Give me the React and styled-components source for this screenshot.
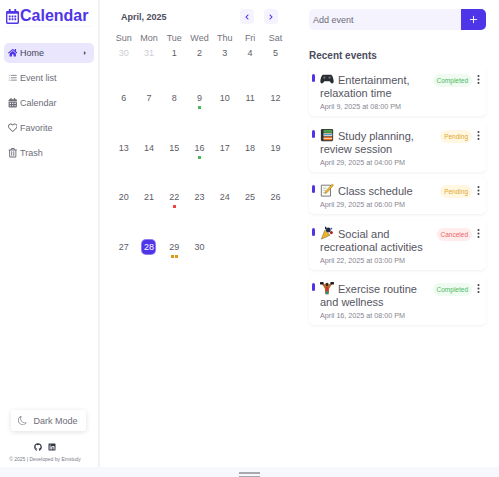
import React from 'react';
import styled, { createGlobalStyle } from 'styled-components';
import { FaHome, FaCaretRight, FaRegCalendarAlt, FaCalendarAlt, FaRegHeart, FaRegTrashAlt, FaGithub, FaLinkedin, FaChevronLeft, FaChevronRight } from 'react-icons/fa';
import { LuList, LuPlus } from 'react-icons/lu';
import { BsMoon, BsThreeDotsVertical } from 'react-icons/bs';

const primary = '#4f35e8';
const textGrey = '#55555f';

const GlobalStyle = createGlobalStyle`
    html, body {
        margin: 0;
        padding: 0;
        height: 100%;
        background: #fff;
        overflow: hidden;
    }
    * {
        box-sizing: border-box;
    }
    body {
        font-family: "Liberation Sans", Arial, sans-serif;
        color: ${textGrey};
    }
`;

const Page = styled.div`
    width: 499px;
    height: 477px;
    display: grid;
    grid-template-rows: 467px 10px;
`;

const Main = styled.div`
    display: grid;
    grid-template-columns: 100px 200px 1fr;
    min-height: 0;
`;

const Sidebar = styled.aside`
    display: flex;
    flex-direction: column;
    border-right: 2px solid #f1f1f4;
    padding: 6px 4px 5px;
`;

const Logo = styled.div`
    display: flex;
    align-items: center;
    gap: 1px;
    height: 21px;
    margin: 0 1px 16px;
    padding-left: 1px;
    color: ${primary};
    font-size: 16px;
    font-weight: 700;
    border-bottom: 1px solid #f8f8fa;
    svg {
        width: 13px;
        height: 15px;
    }
`;

const Nav = styled.nav`
    display: flex;
    flex-direction: column;
    gap: 5px;
`;

const NavItem = styled.div`
    height: 20px;
    display: flex;
    align-items: center;
    gap: 3px;
    padding: 0 4px 0 3.5px;
    border-radius: 5px;
    font-size: 9px;
    color: ${({ $active }) => ($active ? '#45455a' : '#6d6d78')};
    background: ${({ $active }) => ($active ? '#e9e6fd' : 'transparent')};
    > svg:first-child {
        width: 9.5px;
        height: 9.5px;
        color: ${({ $active }) => ($active ? primary : '#6d6d78')};
    }
    span {
        flex: 1;
    }
`;

const Caret = styled(FaCaretRight)`
    width: 6px;
    height: 6px;
    color: #5b5b6a;
    margin-right: 2px;
`;

const SidebarFooter = styled.div`
    margin-top: auto;
    display: flex;
    flex-direction: column;
    align-items: center;
`;

const DarkButton = styled.button`
    width: 75px;
    height: 21px;
    border: 0;
    border-radius: 2px;
    background: #fff;
    box-shadow: 0 1px 5px rgba(40, 40, 80, 0.14);
    display: flex;
    align-items: center;
    justify-content: center;
    gap: 6px;
    font-family: inherit;
    font-size: 9px;
    color: #6d6d78;
    margin: 0 0 12px -2px;
    svg {
        width: 9px;
        height: 9px;
    }
`;

const Socials = styled.div`
    display: flex;
    gap: 6px;
    color: #333844;
    margin-left: -8px;
    margin-bottom: 5px;
    svg {
        width: 8px;
        height: 8px;
    }
`;

const Copyright = styled.div`
    font-size: 5px;
    color: #7c7c86;
    white-space: nowrap;
    margin-left: -8px;
`;

const CalendarPane = styled.section`
    padding: 9px 0 0 11px;
    display: flex;
    flex-direction: column;
`;

const CalendarHead = styled.div`
    display: flex;
    align-items: center;
    height: 15px;
    padding: 0 22px 0 10px;
`;

const MonthTitle = styled.div`
    flex: 1;
    font-size: 9px;
    font-weight: 700;
    color: #4c4c5c;
`;

const NavButton = styled.button`
    width: 14px;
    height: 15px;
    padding: 0;
    margin-left: 10px;
    border: 0;
    border-radius: 4px;
    background: #f4f3fe;
    color: ${primary};
    display: flex;
    align-items: center;
    justify-content: center;
    svg {
        width: 6px;
        height: 6px;
    }
`;

const WeekRow = styled.div`
    display: grid;
    grid-template-columns: repeat(7, 25.3px);
    margin-top: 6px;
    height: 16px;
    align-items: center;
    font-size: 9px;
    color: #73737e;
    text-align: center;
`;

const DayGrid = styled.div`
    display: grid;
    grid-template-columns: repeat(7, 25.3px);
    grid-template-rows: 45px repeat(4, 49.7px);
`;

const DayCell = styled.div`
    display: flex;
    flex-direction: column;
    align-items: center;
    font-size: 9px;
    color: ${({ $muted }) => ($muted ? '#cdcdd4' : '#5c5c66')};
`;

const DayNumber = styled.div`
    width: 13px;
    height: 14px;
    display: flex;
    align-items: center;
    justify-content: center;
    border-radius: 4px;
    color: ${({ $today }) => ($today ? '#fff' : 'inherit')};
    background: ${({ $today }) => ($today ? primary : 'transparent')};
    box-shadow: ${({ $today }) => ($today ? '0 0 0 1px #8c7af0' : 'none')};
`;

const Dots = styled.div`
    display: flex;
    gap: 1px;
    margin-top: 1px;
`;

const Dot = styled.i`
    width: 3px;
    height: 3px;
    background: ${({ $color }) => $color};
`;

const EventsPane = styled.section`
    padding: 9px 13px 0 9px;
    display: flex;
    flex-direction: column;
`;

const AddRow = styled.div`
    display: flex;
    height: 21px;
    border-radius: 5px;
    overflow: hidden;
    background: #f4f3fe;
`;

const AddInput = styled.div`
    flex: 1;
    display: flex;
    align-items: center;
    padding-left: 4px;
    font-size: 9px;
    color: #6d6d78;
`;

const AddButton = styled.button`
    width: 25px;
    border: 0;
    padding: 0;
    background: ${primary};
    color: #fff;
    display: flex;
    align-items: center;
    justify-content: center;
    svg {
        width: 11px;
        height: 11px;
    }
`;

const SectionTitle = styled.h2`
    margin: 20px 0 4px;
    font-size: 10px;
    line-height: 12px;
    font-weight: 700;
    color: #4c4c5c;
`;

const EventList = styled.div`
    display: flex;
    flex-direction: column;
    gap: 5.5px;
`;

const EventCard = styled.article`
    display: grid;
    grid-template-columns: 11px 1fr auto 12px;
    padding: 6px 2px 5px 3px;
    border-radius: 5px;
    background: #fff;
    box-shadow: 0 1px 3px rgba(40, 40, 80, 0.07);
`;

const Marker = styled.i`
    width: 3px;
    height: 8px;
    margin-top: 2px;
    border-radius: 2px;
    background: ${primary};
`;

const EventBody = styled.div`
    min-width: 0;
`;

const EventTitle = styled.div`
    font-size: 11px;
    line-height: 13px;
    color: #55555f;
    margin-left: -3px;
    svg {
        width: 14px;
        height: 14px;
        vertical-align: -2px;
        margin: 0 4px 0 0;
    }
`;

const EventDate = styled.div`
    font-size: 7.2px;
    line-height: 9px;
    margin: 2px 0 0 -3px;
    color: #85858f;
`;

const Badge = styled.span`
    align-self: start;
    height: 13px;
    margin-top: 2px;
    padding: 0 4px;
    border-radius: 7px;
    font-size: 6.5px;
    line-height: 13px;
    color: ${({ $status }) => statusColors[$status].fg};
    background: ${({ $status }) => statusColors[$status].bg};
`;

const MoreButton = styled(BsThreeDotsVertical)`
    width: 11px;
    height: 11px;
    color: #44444e;
    margin: 2px 0 0 1px;
`;

const BottomBar = styled.div`
    background: #f6f8fe;
    display: flex;
    justify-content: center;
    align-items: center;
`;

const Handle = styled.div`
    width: 21px;
    height: 5px;
    margin-top: 4px;
    border-top: 2px solid #a9a9ad;
    border-bottom: 1px solid #a9a9ad;
`;

const statusColors = {
    Completed: { fg: '#4cb85c', bg: '#effbf0' },
    Pending: { fg: '#dfa72e', bg: '#fff7e2' },
    Canceled: { fg: '#ee6464', bg: '#ffeded' },
};

const GamepadEmoji = () => (
    <svg viewBox="0 0 16 16">
        <path d="M4 3h8c2 0 3 3 3.6 7 .4 3-2 4-3.2 2.400L11 10.500H5L3.600 12.400C2.400 14 0 13 .4 10 1 6 2 3 4 3z" fill="#2a2c33" />
        <circle cx="5" cy="6.500" r="1.300" fill="#777" />
        <circle cx="11" cy="6.500" r="1.300" fill="#777" />
    </svg>
);

const BooksEmoji = () => (
    <svg viewBox="0 0 16 16">
        <rect x="1" y="1" width="14" height="14" rx="1.500" fill="#2c2f33" />
        <rect x="4" y="2" width="10" height="3.500" fill="#4f9d4a" />
        <rect x="4" y="6" width="10" height="3.500" fill="#e9e3cf" />
        <rect x="4" y="7" width="10" height="1.200" fill="#4a90c8" />
        <rect x="4" y="10" width="10" height="4" fill="#e8742c" />
        <rect x="4" y="11.500" width="10" height="1" fill="#f6d9b8" />
    </svg>
);

const MemoEmoji = () => (
    <svg viewBox="0 0 16 16">
        <path d="M1.500 2.500h10.500v12.500H1.500z" fill="#fbfaf5" stroke="#6a6a6a" strokeWidth="1" />
        <path d="M3.500 6h4M3.500 8.500h3M3.500 11h3" stroke="#b0b0b0" strokeWidth=".8" />
        <path d="M14 1 6.500 9.500 5.500 12l2.500-1L15.500 2.500z" fill="#f2b632" stroke="#8a6a10" strokeWidth=".5" />
    </svg>
);

const PartyEmoji = () => (
    <svg viewBox="0 0 16 16">
        <path d="M1.500 15 5.500 4.500l6 6z" fill="#eeb32f" stroke="#6e5212" strokeWidth=".5" />
        <circle cx="9.500" cy="4.500" r="2.800" fill="#1f2c48" />
        <circle cx="13" cy="7.500" r="1.800" fill="#a92a2a" />
        <path d="M6.500 .8v3" stroke="#1a1a1a" strokeWidth="1.500" />
        <circle cx="13" cy="3" r="1" fill="#3a62c0" />
    </svg>
);

const LifterEmoji = () => (
    <svg viewBox="0 0 16 16">
        <path d="M2 3 3.500 2 7 5.500h2L12.500 2 14 3 10.500 8.500 10 15H6l-.5-6.500z" fill="#b86a26" />
        <rect x="6.500" y="7" width="3" height="5" fill="#c8362c" />
        <rect x="6.500" y="12" width="3" height="3" fill="#2a8f8a" />
        <circle cx="8" cy="4" r="1.900" fill="#3a2418" />
        <rect x="0" y="1" width="4" height="3" rx=".7" fill="#1f1f24" />
        <rect x="12" y="1" width="4" height="3" rx=".7" fill="#1f1f24" />
    </svg>
);

const navItems = [
    { label: 'Home', icon: FaHome, active: true },
    { label: 'Event list', icon: LuList },
    { label: 'Calendar', icon: FaCalendarAlt },
    { label: 'Favorite', icon: FaRegHeart },
    { label: 'Trash', icon: FaRegTrashAlt },
];

const weekDays = ['Sun', 'Mon', 'Tue', 'Wed', 'Thu', 'Fri', 'Sat'];

const days = [30, 31, ...Array.from({ length: 30 }, (_, i) => i + 1)];

const dayDots = {
    9: ['#4cb85c'],
    16: ['#4cb85c'],
    22: ['#ee4444'],
    29: ['#dd9a18', '#dd9a18'],
};

const events = [
    { emoji: GamepadEmoji, title: 'Entertainment, relaxation time', date: 'April 9, 2025 at 08:00 PM', status: 'Completed' },
    { emoji: BooksEmoji, title: 'Study planning, review session', date: 'April 29, 2025 at 04:00 PM', status: 'Pending' },
    { emoji: MemoEmoji, title: 'Class schedule', date: 'April 29, 2025 at 06:00 PM', status: 'Pending' },
    { emoji: PartyEmoji, title: 'Social and recreational activities', date: 'April 22, 2025 at 03:00 PM', status: 'Canceled' },
    { emoji: LifterEmoji, title: 'Exercise routine and wellness', date: 'April 16, 2025 at 08:00 PM', status: 'Completed' },
];

function App() {
    return (
        <Page>
            <GlobalStyle />
            <Main>
                <Sidebar>
                    <Logo><FaRegCalendarAlt />Calendar</Logo>
                    <Nav>
                        {navItems.map(({ label, icon: Icon, active }) => (
                            <NavItem key={label} $active={active}>
                                <Icon />
                                <span>{label}</span>
                                {active && <Caret />}
                            </NavItem>
                        ))}
                    </Nav>
                    <SidebarFooter>
                        <DarkButton><BsMoon />Dark Mode</DarkButton>
                        <Socials><FaGithub /><FaLinkedin /></Socials>
                        <Copyright>© 2025 | Developed by Emstudy</Copyright>
                    </SidebarFooter>
                </Sidebar>
                <CalendarPane>
                    <CalendarHead>
                        <MonthTitle>April, 2025</MonthTitle>
                        <NavButton><FaChevronLeft /></NavButton>
                        <NavButton><FaChevronRight /></NavButton>
                    </CalendarHead>
                    <WeekRow>
                        {weekDays.map((d) => <div key={d}>{d}</div>)}
                    </WeekRow>
                    <DayGrid>
                        {days.map((d, i) => (
                            <DayCell key={i} $muted={i < 2}>
                                <DayNumber $today={d === 28 && i > 1}>{d}</DayNumber>
                                {i > 1 && dayDots[d] && (
                                    <Dots>
                                        {dayDots[d].map((c, j) => <Dot key={j} $color={c} />)}
                                    </Dots>
                                )}
                            </DayCell>
                        ))}
                    </DayGrid>
                </CalendarPane>
                <EventsPane>
                    <AddRow>
                        <AddInput>Add event</AddInput>
                        <AddButton><LuPlus /></AddButton>
                    </AddRow>
                    <SectionTitle>Recent events</SectionTitle>
                    <EventList>
                        {events.map(({ emoji: Emoji, title, date, status }) => (
                            <EventCard key={title}>
                                <Marker />
                                <EventBody>
                                    <EventTitle><Emoji />{title}</EventTitle>
                                    <EventDate>{date}</EventDate>
                                </EventBody>
                                <Badge $status={status}>{status}</Badge>
                                <MoreButton />
                            </EventCard>
                        ))}
                    </EventList>
                </EventsPane>
            </Main>
            <BottomBar><Handle /></BottomBar>
        </Page>
    );
}

export default App;
